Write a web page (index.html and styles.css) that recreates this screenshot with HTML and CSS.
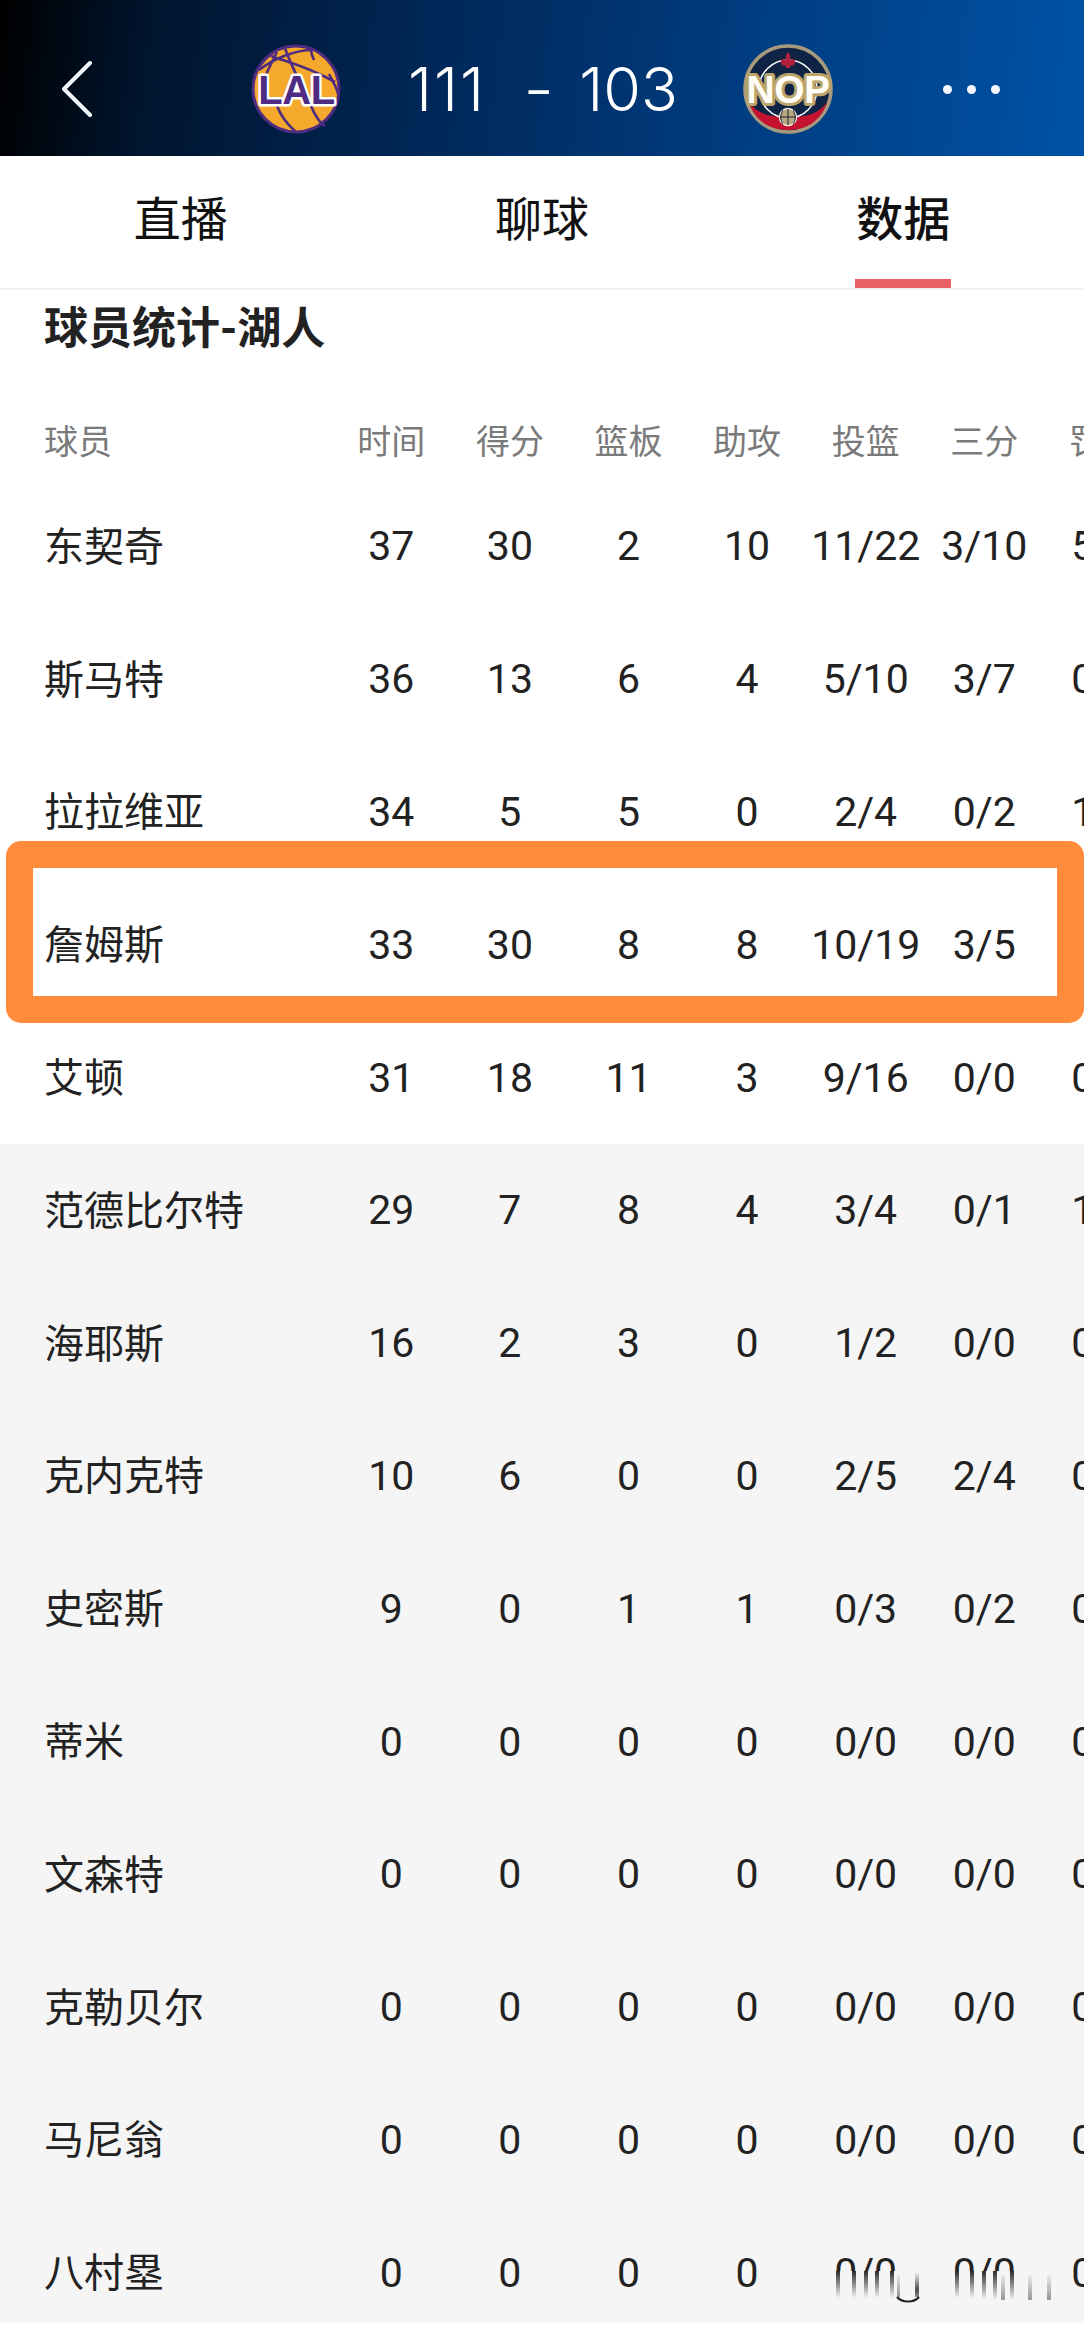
FILE: index.html
```html
<!DOCTYPE html>
<html lang="zh-CN">
<head>
<meta charset="utf-8">
<title>球员统计-湖人</title>
<link rel="stylesheet" href="styles.css">
</head>
<body>
<div class="page">
  <header class="score-bar">
    <svg class="back" viewBox="0 0 30 56" aria-hidden="true"><polyline points="28,2 2,28 28,54"/></svg>
    <svg class="logo logo-lal" viewBox="0 0 90 90" aria-hidden="true">
      <circle class="lal-ball" cx="45" cy="45" r="43"/>
      <g class="lal-seam">
        <path d="M8 26C24 14 44 6 62 6"/>
        <path d="M20 12C36 18 56 22 84 38"/>
        <path d="M34 4C40 22 52 44 60 62C64 72 70 80 74 82"/>
        <path d="M26 8C18 24 12 34 12 46"/>
        <path d="M60 5C60 7 61 12 63 16"/>
        <path d="M26 62C30 72 36 80 44 87"/>
        <path d="M78 30C82 38 86 44 87 50"/>
      </g>
      <text class="lal-text" x="45.5" y="60">LAL</text>
    </svg>
    <div class="score">
      <span class="score-home">111</span>
      <span class="dash">-</span>
      <span>103</span>
    </div>
    <svg class="logo logo-nop" viewBox="0 0 90 90" aria-hidden="true">
      <circle class="nop-disc" cx="45" cy="45" r="43"/>
      <path class="nop-red" d="M6 58C16 72 30 73 45 73C60 73 74 72 84 58C79 76 64 86 45 86C26 86 11 76 6 58Z"/>
      <circle class="nop-ring" cx="45" cy="45" r="29"/>
      <path class="nop-fleur" d="M45 8C47 11 48 13 47 16C50 14 53 15 52 19C51 22 49 22 48 21L47 24H43L42 21C41 22 39 22 38 19C37 15 40 14 43 16C42 13 43 11 45 8Z"/>
      <circle class="nop-ball" cx="45" cy="73" r="8.5"/>
      <path class="nop-ball-line" d="M45 65V81M37 73H53M40 66C37 71 37 76 40 80M50 66C53 71 53 76 50 80"/>
      <text class="nop-text" x="45" y="59">NOP</text>
    </svg>
    <div class="more"><i></i><i></i><i></i></div>
  </header>

  <nav class="tabs">
    <div class="tab">直播</div>
    <div class="tab">聊球</div>
    <div class="tab tab-active"><span class="tab-label">数据</span></div>
  </nav>

  <main class="stats">
    <h1 class="stats-title">球员统计-湖人</h1>
    <div class="row row-head"><div class="name">球员</div><div>时间</div><div>得分</div><div>篮板</div><div>助攻</div><div>投篮</div><div>三分</div><div>罚球</div></div>
    <div class="row"><div class="name">东契奇</div><div>37</div><div>30</div><div>2</div><div>10</div><div>11/22</div><div>3/10</div><div>5/5</div></div>
    <div class="row"><div class="name">斯马特</div><div>36</div><div>13</div><div>6</div><div>4</div><div>5/10</div><div>3/7</div><div>0/0</div></div>
    <div class="row"><div class="name">拉拉维亚</div><div>34</div><div>5</div><div>5</div><div>0</div><div>2/4</div><div>0/2</div><div>1/2</div></div>
    <div class="row row-marked"><div class="name">詹姆斯</div><div>33</div><div>30</div><div>8</div><div>8</div><div>10/19</div><div>3/5</div><div>7/7</div><div class="mark"></div></div>
    <div class="row"><div class="name">艾顿</div><div>31</div><div>18</div><div>11</div><div>3</div><div>9/16</div><div>0/0</div><div>0/0</div></div>
    <div class="row row-bench"><div class="name">范德比尔特</div><div>29</div><div>7</div><div>8</div><div>4</div><div>3/4</div><div>0/1</div><div>1/2</div></div>
    <div class="row row-bench"><div class="name">海耶斯</div><div>16</div><div>2</div><div>3</div><div>0</div><div>1/2</div><div>0/0</div><div>0/0</div></div>
    <div class="row row-bench"><div class="name">克内克特</div><div>10</div><div>6</div><div>0</div><div>0</div><div>2/5</div><div>2/4</div><div>0/0</div></div>
    <div class="row row-bench"><div class="name">史密斯</div><div>9</div><div>0</div><div>1</div><div>1</div><div>0/3</div><div>0/2</div><div>0/0</div></div>
    <div class="row row-bench"><div class="name">蒂米</div><div>0</div><div>0</div><div>0</div><div>0</div><div>0/0</div><div>0/0</div><div>0/0</div></div>
    <div class="row row-bench"><div class="name">文森特</div><div>0</div><div>0</div><div>0</div><div>0</div><div>0/0</div><div>0/0</div><div>0/0</div></div>
    <div class="row row-bench"><div class="name">克勒贝尔</div><div>0</div><div>0</div><div>0</div><div>0</div><div>0/0</div><div>0/0</div><div>0/0</div></div>
    <div class="row row-bench"><div class="name">马尼翁</div><div>0</div><div>0</div><div>0</div><div>0</div><div>0/0</div><div>0/0</div><div>0/0</div></div>
    <div class="row row-bench row-last"><div class="name">八村塁</div><div>0</div><div>0</div><div>0</div><div>0</div><div>0/0</div><div>0/0</div><div>0/0</div>
      <svg class="smear" viewBox="820 2272 240 34" aria-hidden="true">
        <defs>
          <linearGradient id="fade" x1="0" y1="0" x2="0" y2="1">
            <stop offset="0" stop-color="#222" stop-opacity=".95"/>
            <stop offset="1" stop-color="#222" stop-opacity="0"/>
          </linearGradient>
          <linearGradient id="rise" x1="0" y1="0" x2="0" y2="1">
            <stop offset="0" stop-color="#222" stop-opacity=".05"/>
            <stop offset=".7" stop-color="#222" stop-opacity=".8"/>
            <stop offset="1" stop-color="#222" stop-opacity=".5"/>
          </linearGradient>
          <linearGradient id="ghost" x1="0" y1="0" x2="0" y2="1">
            <stop offset="0" stop-color="#222" stop-opacity=".05"/>
            <stop offset="1" stop-color="#222" stop-opacity=".45"/>
          </linearGradient>
        </defs>
        <rect class="smear-cover" x="820" y="2272" width="240" height="34"/>
        <rect fill="url(#fade)" x="836" y="2272" width="4" height="27"/>
        <rect fill="url(#fade)" x="852" y="2272" width="4" height="27"/>
        <rect fill="url(#fade)" x="864" y="2272" width="4" height="27"/>
        <rect fill="url(#fade)" x="875" y="2272" width="4" height="27"/>
        <rect fill="url(#fade)" x="890" y="2272" width="4" height="27"/>
        <rect fill="url(#fade)" x="955" y="2272" width="4" height="27"/>
        <rect fill="url(#fade)" x="970" y="2272" width="4" height="27"/>
        <rect fill="url(#fade)" x="982" y="2272" width="4" height="29"/>
        <rect fill="url(#fade)" x="993" y="2272" width="4" height="29"/>
        <rect fill="url(#fade)" x="1010" y="2272" width="4" height="29"/>
        <rect fill="url(#ghost)" x="1001" y="2276" width="4" height="25"/>
        <rect fill="url(#ghost)" x="1028" y="2276" width="4" height="25"/>
        <rect fill="url(#ghost)" x="1047" y="2276" width="4" height="25"/>
        <rect fill="url(#ghost)" x="897" y="2276" width="3" height="22"/>
        <rect fill="url(#rise)" x="915" y="2274" width="4" height="24"/>
        <path class="smear-arc" d="M897 2298C902 2304 914 2304 919 2298"/>
      </svg>
    </div>
  </main>
</div>
</body>
</html>
```
FILE: styles.css
```css
* { box-sizing: border-box; }
html, body { margin: 0; padding: 0; background: #fff; }
.page {
  width: 1084px;
  height: 2326px;
  overflow: hidden;
  background: #fff;
  font-family: Roboto, "Noto Sans CJK SC", sans-serif;
  color: #222;
}

/* score bar */
.score-bar {
  height: 156px;
  padding: 44px 0 22px 62px;
  display: flex;
  align-items: center;
  background: linear-gradient(97deg, #000 0%, #00152f 14%, #002655 38%, #003a7c 65%, #0052a6 100%);
  color: #fff;
}
.back { width: 30px; height: 56px; flex: none; }
.back polyline { fill: none; stroke: #f2f5f8; stroke-width: 4; stroke-linecap: round; stroke-linejoin: round; }
.logo { width: 90px; height: 90px; flex: none; }
.logo-lal { margin-left: 159px; }
.logo-nop { margin-left: 65px; }
.lal-ball { fill: #f5a92c; stroke: #4e2c80; stroke-width: 3; }
.lal-seam path { fill: none; stroke: #4e2c80; stroke-width: 2.6; }
.lal-text {
  font: 700 40px "Liberation Sans", sans-serif;
  text-anchor: middle;
  letter-spacing: -0.5px;
  fill: #4f2c84;
  stroke: #fff;
  stroke-width: 5px;
  stroke-linejoin: round;
  paint-order: stroke;
}
.nop-disc { fill: #0f2444; stroke: #a89a7c; stroke-width: 3.5; }
.nop-red { fill: #c4122f; }
.nop-ring { fill: none; stroke: #fff; stroke-width: 1.5; }
.nop-fleur { fill: #b3203c; }
.nop-ball { fill: #b9a77f; stroke: #f3efe3; stroke-width: 1.5; }
.nop-ball-line { fill: none; stroke: #1a2238; stroke-width: 1; }
.nop-text {
  font: 700 39px "Liberation Sans", sans-serif;
  text-anchor: middle;
  letter-spacing: -0.5px;
  fill: #fffdf6;
  stroke: #bca56c;
  stroke-width: 6px;
  stroke-linejoin: round;
  paint-order: stroke;
}
.score {
  margin-left: 67px;
  width: 270px;
  display: flex;
  justify-content: space-between;
  font-family: Inter, Roboto, sans-serif;
  font-size: 61px;
  font-weight: 300;
  line-height: 1;
}
.score-home { letter-spacing: 2px; }
.dash { transform: scaleX(1.1); margin-left: 12px; }
.more { margin-left: 110px; display: flex; gap: 15px; }
.more i { width: 9px; height: 9px; border-radius: 50%; background: #f4f7fb; }

/* tabs */
.tabs {
  height: 134px;
  display: grid;
  grid-template-columns: repeat(3, 1fr);
  border-bottom: 2px solid #f1f1f1;
  font-size: 47px;
  color: #111;
}
.tab { display: flex; justify-content: center; align-items: flex-start; padding-top: 32px; line-height: 64px; }
.tab-active { font-weight: 500; }
.tab-label { height: 132px; border-bottom: 9px solid #e95f63; width: 96px; text-align: center; margin-top: -32px; padding-top: 32px; }

/* table */
.stats { height: 2033px; overflow: hidden; width: 1084px; }
.stats-title { margin: 0 0 35px; padding: 3px 0 0 44px; font-size: 44px; font-weight: 700; line-height: 72px; height: 75px; color: #222; }
.row {
  width: 1162.2px;
  height: 132.8px;
  display: grid;
  grid-template-columns: 332px repeat(7, 118.6px);
  align-items: center;
  justify-items: center;
  font-size: 41px;
  position: relative;
}
.row > .name { justify-self: start; padding: 0 0 5px 44px; font-size: 40px; }
.row-head { height: 80px; font-size: 34px; color: #7a7a7a; padding-bottom: 2px; }
.row-head > .name { font-size: 34px; padding-bottom: 0; }
.row-bench { background: #f5f5f5; }
.mark {
  position: absolute;
  left: 6px;
  top: -37px;
  width: 1078px;
  height: 182px;
  border: 27px solid #ff8b3b;
  border-radius: 15px;
}
.smear {
  position: absolute;
  left: 820px;
  top: 65px;
  width: 240px;
  height: 34px;
}
.smear-cover { fill: #f5f5f5; }
.smear-arc { fill: none; stroke: #222; stroke-width: 2; }
```
